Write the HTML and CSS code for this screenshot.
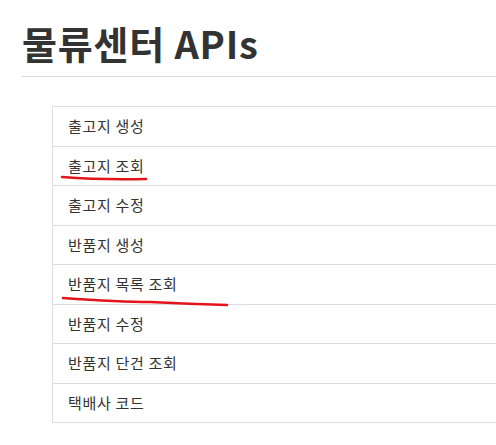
FILE: index.html
```html
<!DOCTYPE html>
<html>
<head>
    <meta charset="utf-8">
    <link rel="stylesheet" href="styles.css">
</head>
<body>
    <div class="page">
        <h1 class="page-title">물류센터 APIs</h1>

        <ul class="api-list">
            <li class="api-item">출고지 생성</li>
            <li class="api-item">출고지 조회</li>
            <li class="api-item">출고지 수정</li>
            <li class="api-item">반품지 생성</li>
            <li class="api-item">반품지 목록 조회</li>
            <li class="api-item">반품지 수정</li>
            <li class="api-item">반품지 단건 조회</li>
            <li class="api-item">택배사 코드</li>
        </ul>
    </div>

    <!-- pen marks drawn over the list -->
    <svg class="marks" width="496" height="445" viewBox="0 0 496 445">
        <path d="M62 177 Q100 180 146 179" />
        <path d="M63 298 Q120 302 150 302 Q190 304 227 305" />
    </svg>
</body>
</html>
```

FILE: styles.css
```css
* {
    box-sizing: border-box;
}

html, body {
    margin: 0;
    overflow: hidden;
}

body {
    font-family: "Noto Sans CJK KR", "Noto Sans", sans-serif;
    color: #333;
    background: #fff;
}

.page {
    padding-left: 22px;
}

.page-title {
    margin: 19px 0 0;
    padding-bottom: 9px;
    font-size: 38px;
    line-height: 48px;
    letter-spacing: 0.8px;
    font-weight: bold;
    color: #333;
    border-bottom: 1px solid #ddd;
}

.api-list {
    list-style: none;
    margin: 29px 0 0 30px;
    padding: 0;
    border-top: 1px solid #ddd;
    border-left: 1px solid #ddd;
}

.api-item {
    padding: 10px 15px;
    font-size: 15px;
    line-height: 18.5px;
    letter-spacing: 0.7px;
    border-bottom: 1px solid #ddd;
}

.marks {
    position: absolute;
    top: 0;
    left: 0;
    pointer-events: none;
}

.marks path {
    fill: none;
    stroke: #e3141c;
    stroke-width: 2.5;
    stroke-linecap: round;
}
```
